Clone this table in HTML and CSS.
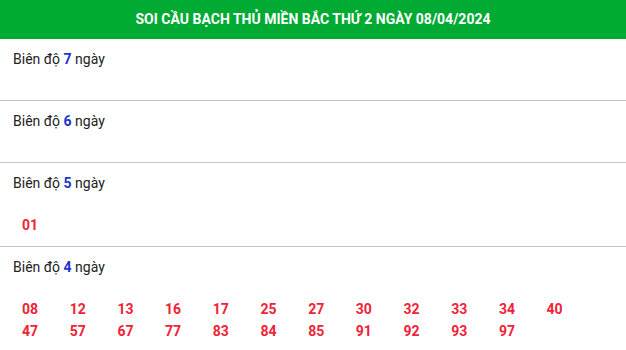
FILE: index.html
```html
<!DOCTYPE html>
<html lang="vi">
<head>
<meta charset="utf-8">
<link rel="stylesheet" href="styles.css">
</head>
<body>
<div class="box">
  <div class="header">SOI CẦU BẠCH THỦ MIỀN BẮC THỨ 2 NGÀY 08/04/2024</div>
  <div class="section">
    <div class="title">Biên độ <b>7</b> ngày</div>
    <div class="nums"></div>
  </div>
  <div class="section">
    <div class="title">Biên độ <b>6</b> ngày</div>
    <div class="nums"></div>
  </div>
  <div class="section">
    <div class="title">Biên độ <b>5</b> ngày</div>
    <div class="nums"><span>01</span></div>
  </div>
  <div class="section">
    <div class="title">Biên độ <b>4</b> ngày</div>
    <div class="nums">
      <span>08</span><span>12</span><span>13</span><span>16</span><span>17</span><span>25</span><span>27</span><span>30</span><span>32</span><span>33</span><span>34</span><span>40</span>
      <span>47</span><span>57</span><span>67</span><span>77</span><span>83</span><span>84</span><span>85</span><span>91</span><span>92</span><span>93</span><span>97</span>
    </div>
  </div>
</div>
</body>
</html>
```
FILE: styles.css
```css
html, body {
  margin: 0;
  padding: 0;
  background: #fff;
}
body {
  font-family: Roboto, "Noto Sans", sans-serif;
  font-size: 14px;
  color: #222;
}
.header {
  background: #00aa33;
  color: #fff;
  font-weight: bold;
  font-size: 14px;
  height: 39px;
  line-height: 38px;
  text-align: center;
}
.section {
  padding: 10px 0;
  border-bottom: 1px solid #c4c4c4;
}
.title {
  padding-left: 13px;
  line-height: 20px;
}
.title b {
  color: #2233cc;
}
.nums {
  padding-top: 21px;
  padding-left: 22px;
  display: grid;
  grid-template-columns: repeat(12, 47.7px);
}
.nums span {
  color: #f02236;
  font-weight: bold;
  line-height: 22px;
}
```
